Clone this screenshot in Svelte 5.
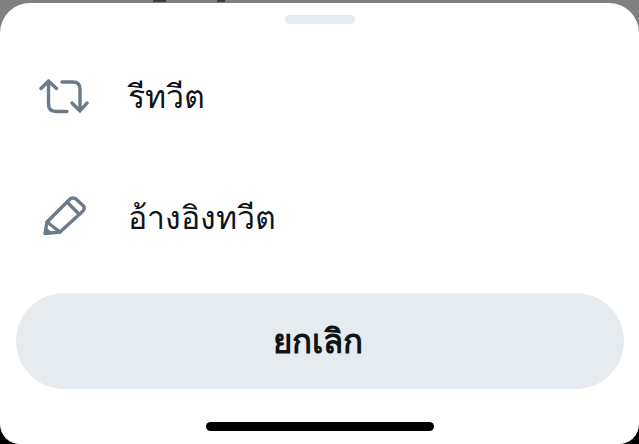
<script lang="ts">
	const actions = [
		{ label: 'รีทวีต', icon: 'retweet' },
		{ label: 'อ้างอิงทวีต', icon: 'pencil' }
	];
</script>

<div class="screen">
	<!-- bottoms of the timeline text that the sheet covers -->
	<div class="peek">
		<span class="mark wide"></span>
		<span class="mark"></span>
	</div>
	<div class="sheet">
		<div class="handle"></div>
		<ul class="actions">
			{#each actions as action}
				<li class="action">
					{#if action.icon === 'retweet'}
						<svg class="icon" viewBox="0 0 50 36" width="50" height="36" aria-hidden="true">
							<path d="M2 9.5 L9.5 2 L17.5 9.5 M9.5 2 V25 Q9.5 32.5 17 32.5 H28" />
							<path d="M23 3 H34 Q41 3 41 10 V32 M33 24 L41 32 L48 24" />
						</svg>
					{:else}
						<svg class="icon" viewBox="0 0 50 44" width="50" height="44" aria-hidden="true">
							<path d="M6 37.5 L8 26 L31 3 Q34 1 37 3 L44 9.5 Q46.5 12 44 15 L21 36 Z" />
							<path d="M28 6 L40 18 M8 26 L21 36" />
							<path class="tip" d="M6 37.5 L7 32 L12.5 36.5 Z" />
						</svg>
					{/if}
					<span class="label">{action.label}</span>
				</li>
			{/each}
		</ul>
		<button class="cancel">ยกเลิก</button>
		<div class="home"></div>
	</div>
</div>

<style>
	:global(body) {
		margin: 0;
		background: #000;
	}

	.screen {
		width: 639px;
		height: 444px;
		overflow: hidden;
		display: flex;
		flex-direction: column;
		background: linear-gradient(#808080 0, #808080 40px, #000 41px);
		font-family: "Noto Sans", "Liberation Sans", "DejaVu Sans", sans-serif;
	}

	.peek {
		height: 3px;
		flex: none;
		display: flex;
		gap: 51px;
		padding-left: 153px;
	}

	.mark {
		width: 8px;
		height: 2px;
		background: #3c3c3c;
	}

	.mark.wide {
		width: 13px;
	}

	.sheet {
		flex: 1;
		display: flex;
		flex-direction: column;
		background: #fff;
		border-radius: 30px 30px 20px 20px;
	}

	.handle {
		width: 70px;
		height: 9px;
		margin: 12px auto 0;
		border-radius: 5px;
		background: #e6ebf0;
	}

	.actions {
		list-style: none;
		margin: 0;
		padding: 12px 0 0;
		height: 257px;
		display: flex;
		flex-direction: column;
	}

	.action {
		height: 121px;
		flex: none;
		display: flex;
		align-items: center;
		padding-left: 39px;
	}

	.icon {
		width: 50px;
		flex: none;
		fill: none;
		stroke: #6c7b8a;
		stroke-width: 3.4;
		stroke-linecap: round;
		stroke-linejoin: round;
	}

	.tip {
		fill: #6c7b8a;
		stroke-width: 1;
	}

	.label {
		margin-left: 39px;
		font-size: 32px;
		font-weight: 500;
		color: #0f1419;
	}

	.cancel {
		display: block;
		width: 608px;
		height: 96px;
		margin: 0 0 0 16px;
		padding: 0 5px 0 0;
		border: 0;
		border-radius: 48px;
		background: #e6ebf0;
		color: #0f1419;
		font-family: inherit;
		font-size: 33px;
		font-weight: 700;
	}

	.home {
		width: 228px;
		height: 9px;
		margin: 33px auto 0;
		border-radius: 5px;
		background: #000;
	}
</style>
